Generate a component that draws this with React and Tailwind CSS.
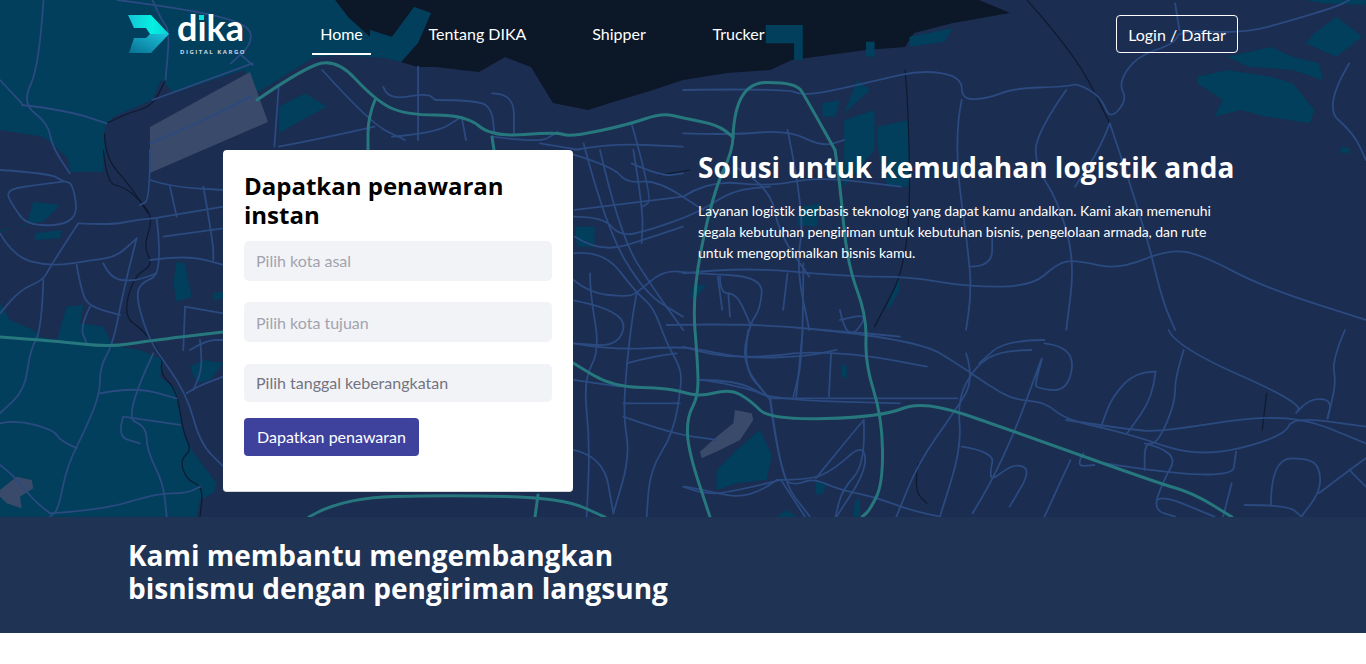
import React from 'react';

// map pieces, written in the coordinates they were read at, one group per part of the page
const Z3 = 'scale(.4355 .3333)';
const Z4 = 'translate(683 0) scale(.4355 .3333)';
const Z6 = 'translate(683 330) scale(.4355 .3333)';
const Z8 = 'translate(0 150) scale(.3333)';
const Z9 = 'translate(570 150) scale(.3333)';

const TEAL_AREAS = [
  ['', '0,0 335,0 348,17 370,37 370,30 392,37 414,7 431,13 418,43 401,62 385,58 340,55 314,57 257,93 244,70 174,93 161,80 152,100 113,117 105,127 105,160 70,170 70,160 44,137 0,130'],
  [Z3, '640,320 700,280 750,320 680,370 640,400'],
  [Z3, '1320,680 1365,680 1365,740 1325,740'],
  [Z8, '0,460 30,510 100,540 120,560 170,570 200,470 250,465 240,520 310,530 330,570 360,590 420,600 490,630 480,680 530,720 550,840 575,900 620,960 650,1000 640,1030 600,1050 590,1100 0,1100'],
  [Z8, '100,155 180,165 130,215 85,220 0,245 0,240 80,225'],
  [Z8, '105,250 185,240 180,265 105,270'],
  [Z8, '200,0 310,0 310,65 210,65'],
  [Z8, '530,335 555,340 575,440 530,455 520,400'],
  [Z8, '640,430 670,425 670,445 640,450'],
  [Z8, '570,650 610,630 670,640 630,690 590,700'],
  [Z9, '25,230 70,230 70,285 25,285'],
  [Z9, '370,405 410,405 375,445 360,445'],
  [Z9, '500,900 570,840 605,915 590,990 500,1000 440,1020 440,960'],
  [Z9, '740,990 770,1000 760,1030 735,1035'],
  [Z9, '855,1050 870,1045 870,1100 850,1100'],
  [Z9, '620,1100 650,1080 680,1100'],
  [Z9, '815,640 830,650 830,685 815,680'],
  [Z9, '690,170 750,160 740,230 680,225'],
  [Z9, '945,480 990,380 990,420 960,470'],
  [Z4, '445,380 520,360 520,560 470,560 450,470'],
  [Z4, '370,360 440,330 440,450 370,560'],
  [Z4, '400,240 430,270 370,340'],
  [Z4, '320,310 360,300 350,350 320,350'],
  [Z4, '1180,230 1250,210 1350,230 1400,250 1450,330 1440,370 1340,350 1280,330 1220,350 1240,300 1180,250'],
  [Z4, '1450,100 1500,50 1560,110 1500,170 1430,130'],
  [Z4, '1250,170 1350,140 1400,170 1460,190 1470,240 1400,210 1300,200'],
  [Z4, '1430,0 1568,0 1568,15 1470,10'],
  [Z4, '1510,440 1530,445 1530,460 1510,458'],
];

const WATER = '335,0 348,17 370,37 370,30 392,37 414,7 431,13 418,43 401,62 418,67 435,67 479,72 505,57 531,67 553,103 588,110 610,103 653,90 683,80 727,73 770,70 792,60 866,50 905,47 914,33 953,23 1010,13 979,0';

const WATER_TEAL = [
  '190,75 275,75 275,180 255,180 255,130 190,130',
  '420,125 440,125 440,170 420,170',
  '520,110 620,85 600,125 520,140',
];

const GREY_AREAS = [
  ['', '150,127 250,72 268,122 150,173'],
  [Z8, '0,1020 50,980 95,990 100,1015 60,1040 65,1075 20,1060 0,1040'],
  [Z9, '390,905 440,860 490,820 495,780 545,790 550,810 510,870 450,900 395,925'],
];

const RIVERS = [
  [Z8, '310,0 320,100 370,110 420,150 460,205 430,290 460,345 400,380 370,500 430,540 490,620 480,670 530,720 550,850 575,900 540,930 560,990 610,1010 600,1100'],
  [Z3, '245,370 290,340 350,320 380,240'],
  [Z3, '240,400 240,470 300,560 340,640'],
  [Z4, '790,0 900,160 980,370'],
  [Z4, '510,210 520,360 520,780 440,980'],
  [Z9, '270,75 360,60'],
  [Z6, '1340,190 1330,300'],
  [Z6, '540,400 530,480 560,520'],
];

const MINOR = [
  // west
  [Z8, '0,60 150,70 190,95 220,100 235,220 85,230 40,170 15,120 105,105 190,95'],
  [Z8, '235,220 330,225 410,210 460,205'],
  [Z8, '0,250 40,320 150,350 280,330 350,320 410,265'],
  [Z8, '235,220 150,350 130,390 60,420 0,490'],
  [Z8, '130,390 125,540 90,600 75,720 0,790'],
  [Z8, '230,345 245,430 270,470 360,495'],
  [Z8, '270,470 240,530 260,580'],
  [Z8, '410,265 370,420 340,580 300,650 300,730 260,830 200,950 175,1080 150,1100'],
  [Z8, '310,340 330,385 400,395 470,370'],
  [Z8, '450,0 450,150 420,165'],
  [Z8, '470,205 490,370 420,400 410,440 430,520 460,590 560,730 600,880 670,950'],
  [Z8, '460,205 670,170'],
  [Z8, '490,260 670,235'],
  [Z8, '450,330 560,315 670,345'],
  [Z8, '450,90 510,110 670,120'],
  [Z8, '510,110 530,200'],
  [Z8, '610,110 640,280 640,330'],
  [Z8, '300,730 400,710 530,745'],
  [Z8, '0,820 50,810 160,840 180,870 230,895'],
  [Z8, '460,610 370,800 440,830 440,900 490,1000 500,1100'],
  [Z8, '370,800 350,860 420,880'],
  [Z8, '370,800 540,825'],
  [Z8, '150,1090 310,1080 470,1030 560,1030 600,1010'],
  [Z8, '0,945 40,975 100,1050 150,1090'],
  [Z8, '555,470 550,600'],
  [Z8, '555,470 670,490'],
  [Z8, '560,730 590,710 670,680'],
  [Z8, '570,600 620,570 670,570'],
  [Z8, '600,570 610,650 580,720'],
  // north west
  [Z3, '100,0 90,200 50,310 110,370 120,440 160,520'],
  [Z3, '350,0 370,60 390,90 380,240'],
  [Z3, '0,240 50,310'],
  [Z3, '50,315 150,330 245,370'],
  [Z3, '350,300 580,190'],
  [Z3, '345,430 480,355 575,290'],
  [Z3, '580,195 540,150'],
  [Z3, '270,0 420,25 570,70 580,130 530,190'],
  [Z3, '640,260 630,440'],
  [Z3, '740,210 850,370 930,420'],
  [Z3, '960,200 960,420'],
  [Z3, '1000,300 1100,300 1130,330 1135,400'],
  [Z3, '1130,280 1180,280 1180,400'],
  [Z3, '1060,350 1070,420'],
  [Z3, '1130,410 1240,430 1280,395'],
  [Z3, '1240,430 1330,450'],
  [Z3, '880,260 890,300 980,280 1000,300'],
  [Z3, '900,410 1000,400 1060,350'],
  [Z3, '640,440 720,420 860,380'],
  [Z3, '1320,450 1400,430 1568,440'],
  [Z3, '1340,430 1390,680 1480,880 1568,950'],
  [Z3, '1450,370 1500,600 1475,620'],
  [Z3, '1320,630 1568,590'],
  [Z3, '1320,710 1380,760 1500,710 1568,680'],
  [Z3, '1450,490 1520,530 1568,520'],
  // middle, under the text
  [Z9, '10,200 100,200 150,260 240,240 380,190 490,120 600,110'],
  [Z9, '10,310 100,300 200,430 250,470 290,580 330,650 335,700 310,850 240,960 230,1100'],
  [Z9, '90,0 150,260 260,430 340,540'],
  [Z9, '190,0 220,180 215,280'],
  [Z9, '0,10 130,50 170,100 260,90 400,180'],
  [Z9, '10,390 60,430 170,440 200,430 280,360 370,370 580,380 570,480 540,520 515,640 600,750'],
  [Z9, '60,370 60,430 90,600 40,690 60,880 50,1100'],
  [Z9, '0,450 170,480 150,590 10,580'],
  [Z9, '10,580 120,600 330,590 400,600 520,625 700,620 800,600'],
  [Z9, '290,525 540,520 810,545 890,550 990,560'],
  [Z9, '10,690 150,710'],
  [Z9, '200,430 190,480 170,640 160,800 180,920 130,1090'],
  [Z9, '160,760 330,760'],
  [Z9, '160,800 300,850 440,870'],
  [Z9, '170,640 250,620 320,610'],
  [Z9, '400,690 520,710 620,750 990,760'],
  [Z9, '450,380 450,430 500,430 540,520'],
  [Z9, '475,430 480,500'],
  [Z9, '700,340 700,620 670,740'],
  [Z9, '810,480 830,580 900,490 810,510'],
  [Z9, '620,990 720,990 790,960 880,880 890,960 800,1100'],
  [Z9, '600,750 630,985 720,1100'],
  [Z9, '620,990 540,1050 400,1020 345,1010'],
  [Z9, '10,900 100,920 130,1090'],
  // north east
  [Z4, '0,270 240,265 280,290 450,240 550,210 640,230 640,300 700,295 760,265 880,260 905,250 960,290 980,360 1020,300 1000,250 1040,170 1130,130 1140,90 1290,100 1400,60 1500,20 1530,0'],
  [Z4, '640,300 620,420 660,800 660,900 650,990'],
  [Z4, '880,270 810,400 810,500 860,600 900,780 880,990'],
  [Z4, '980,370 960,440 900,560'],
  [Z4, '980,370 1060,680 1100,900 1130,990'],
  [Z4, '1530,190 1470,320 1540,400 1568,480'],
  [Z4, '1130,10 1140,90'],
  [Z4, '0,400 110,405 240,390 320,440 370,420'],
  [Z4, '0,590 60,540 200,560 310,530 500,560'],
  [Z4, '240,390 280,640 260,800 290,990'],
  [Z4, '120,500 200,560 220,700 290,830'],
  [Z4, '0,820 130,800 380,830 520,830 650,860 800,860 860,790 900,780 1000,810 1120,745 1200,770 1330,860 1568,960'],
  [Z4, '80,830 90,930'],
  [Z4, '240,820 230,930'],
  [Z4, '660,800 710,800 710,700'],
  // south east
  [Z6, '0,50 70,80 200,80 280,65 420,75 560,110'],
  [Z6, '320,0 540,30 640,110 700,165 760,210 830,215 880,270 1020,310 1190,385 1380,320 1400,260 1568,290'],
  [Z6, '1115,0 1130,50 1425,220 1400,260 1440,205 1490,210 1480,265'],
  [Z6, '1520,0 1490,90 1500,160 1480,265'],
  [Z6, '1150,60 1130,140 1130,220 1090,340 1060,340 1060,420'],
  [Z6, '1085,125 1040,125 985,200 960,290'],
  [Z6, '1085,125 1080,200 1020,310'],
  [Z6, '650,70 670,150 620,250 540,400 490,560'],
  [Z6, '800,60 730,60 670,110 630,210 640,350 590,560'],
  [Z6, '830,30 740,30 680,100'],
  [Z6, '830,40 900,50 885,185 810,175 810,155 830,60 800,170 760,310 710,450 665,550'],
  [Z6, '640,350 715,365 705,430 710,450 760,400 800,420 750,530'],
  [Z6, '200,205 630,205'],
  [Z6, '200,200 225,450 260,465 300,445 360,480 440,500 520,540 590,560'],
  [Z6, '225,450 100,490 45,490 0,470'],
  [Z6, '225,450 280,560'],
  [Z6, '150,0 135,110 195,200'],
  [Z6, '275,0 260,200'],
  [Z6, '340,70 335,200'],
  [Z6, '40,150 120,150 195,200'],
  [Z6, '1060,340 1140,365 1100,460 1080,540 1130,560'],
  [Z6, '920,370 900,410 945,405'],
  [Z6, '890,390 830,560'],
  [Z6, '970,400 1260,460 1270,365'],
  [Z6, '1260,460 1240,560'],
  [Z6, '1290,525 1390,525 1420,560'],
  [Z6, '1350,525 1350,385 1445,385 1465,430 1460,490 1420,560'],
  [Z6, '1460,490 1530,420 1568,385'],
  [Z6, '1530,420 1568,470'],
  [Z6, '1090,510 1100,495 1220,560'],
  [Z6, '415,270 370,340 305,445'],
  [Z6, '415,270 420,400 365,480 350,560'],
  [Z6, '880,270 1030,300 1100,305 1390,245 1568,340'],
];

const MAJOR = [
  ['', '257,100 296,73 335,57 375,100 405,115 466,115 492,137 557,132 570,137 627,125 662,113 683,118 718,125 733,137'],
  ['', '375,100 368,117 368,150'],
  ['', '492,137 494,150'],
  ['', '733,137 735,83 796,82 807,100 835,150'],
  ['', '835,150 840,183 847,263 867,317 865,363 882,417 883,483 870,510 862,517'],
  ['', '733,137 733,150 713,193 692,293 698,367 698,397 687,417 688,450 710,517'],
  ['', '0,337 55,341 110,347 147,341 223,332'],
  ['', '560,355 573,363 613,387 670,388 698,397 730,389 750,400 770,420 882,417 923,400 1010,430 1158,483 1193,493 1232,517'],
  ['', '309,517 340,498 449,495 562,498 605,517'],
  ['', '538,495 535,517'],
];

// rounds the corners of a read-off line so the roads don't look like zigzags
function toPath(points) {
  const p = points.split(' ').map((q) => q.split(',').map(Number));
  let d = `M${p[0][0]} ${p[0][1]}`;
  for (let i = 1; i < p.length - 1; i++) {
    const mx = (p[i][0] + p[i + 1][0]) / 2;
    const my = (p[i][1] + p[i + 1][1]) / 2;
    d += ` Q${p[i][0]} ${p[i][1]} ${mx} ${my}`;
  }
  const last = p[p.length - 1];
  return `${d} L${last[0]} ${last[1]}`;
}

function Area({ transform, points, className }) {
  return <polygon transform={transform || undefined} points={points} className={className} />;
}

function Line({ transform, points, className }) {
  return (
    <path
      transform={transform || undefined}
      d={toPath(points)}
      fill="none"
      strokeLinejoin="round"
      strokeLinecap="round"
      vectorEffect="non-scaling-stroke"
      className={className}
    />
  );
}

function CityMap() {
  return (
    <svg className="absolute inset-0 h-full w-full blur-[0.4px]" viewBox="0 0 1366 517" aria-hidden="true">
      <polygon points={WATER} className="fill-[#0c1728]" />
      {WATER_TEAL.map((p) => <Area key={p} transform={Z4} points={p} className="fill-[#013f5c]" />)}
      {TEAL_AREAS.map(([t, p]) => <Area key={p} transform={t} points={p} className="fill-[#013f5c]" />)}
      {GREY_AREAS.map(([t, p]) => <Area key={p} transform={t} points={p} className="fill-[#3a4a6a]" />)}
      {RIVERS.map(([t, p]) => <Line key={p} transform={t} points={p} className="stroke-[#0e1a30] [stroke-width:1.2px]" />)}
      {MINOR.map(([t, p]) => <Line key={p} transform={t} points={p} className="stroke-[#2b4a80] [stroke-width:1.8px]" />)}
      {MAJOR.map(([t, p]) => <Line key={p} transform={t} points={p} className="stroke-[#26777e] [stroke-width:3px]" />)}
    </svg>
  );
}

function Logo() {
  return (
    <div className="relative h-[40px] w-[117px] shrink-0">
      <svg className="absolute left-0 top-0" width="42" height="39" viewBox="0 0 42 39" aria-hidden="true">
        <defs>
          <linearGradient id="logoTop" x1="0" y1="0" x2="1" y2="0">
            <stop offset="0" stopColor="#17c3d6" />
            <stop offset="0.6" stopColor="#03f0e2" />
            <stop offset="1" stopColor="#0cd0d8" />
          </linearGradient>
          <linearGradient id="logoBottom" x1="0" y1="1" x2="1" y2="0">
            <stop offset="0" stopColor="#0a6f92" />
            <stop offset="1" stopColor="#19c6dc" />
          </linearGradient>
        </defs>
        <polygon points="0,0 23,0 41,19 22,19 18,13 6,13" fill="url(#logoTop)" />
        <polygon points="1,38 6,23 18,23 22,19 41,19 23,38" fill="url(#logoBottom)" />
      </svg>
      <span className="absolute left-[49px] top-[-1px] font-['Lato'] text-[36px] font-bold leading-[26px] text-white">
        dıka
      </span>
      <span className="absolute left-[71px] top-[0px] h-[5px] w-[5px] bg-[#0ee0dc]" />
      <span className="absolute left-[52px] top-[33px] whitespace-nowrap font-['Open_Sans'] text-[6px] font-bold leading-[8px] tracking-[1.5px] text-[#cfd8e0]">
        DIGITAL KARGO
      </span>
    </div>
  );
}

const LINKS = [
  { label: 'Home', active: true, width: 'w-[59px]' },
  { label: 'Tentang DIKA', width: 'w-[113px]' },
  { label: 'Shipper', width: 'w-[70px]' },
  { label: 'Trucker', width: 'w-[69px]' },
];

function Navbar() {
  return (
    <div className="flex items-start pt-[15px]">
      <Logo />
      <nav className="ml-[67px] flex gap-[50px]">
        {LINKS.map((l) => (
          <a
            key={l.label}
            className={`flex h-[40px] items-center justify-center border-b-2 text-base text-white ${l.width} ${
              l.active ? 'border-white' : 'border-transparent'
            }`}
          >
            {l.label}
          </a>
        ))}
      </nav>
      <button className="ml-auto h-[38px] w-[122px] rounded-[4px] border border-white pt-[1px] text-base text-white">
        Login / Daftar
      </button>
    </div>
  );
}

function QuoteCard() {
  return (
    <form className="h-[342px] w-[350px] shrink-0 rounded-[4px] border-b border-[#d8d8d8] bg-white px-[21px] pt-[21px]">
      <h2 className="font-['Open_Sans'] text-2xl font-bold leading-[29px] text-black">
        Dapatkan penawaran instan
      </h2>
      <input
        placeholder="Pilih kota asal"
        className="mt-[12px] block h-[40px] w-full rounded-[5px] bg-[#f2f3f7] px-3 pb-[2px] text-base placeholder:text-[#a3a3ad]"
      />
      <input
        placeholder="Pilih kota tujuan"
        className="mt-[21px] block h-[40px] w-full rounded-[5px] bg-[#f2f3f7] px-3 text-base placeholder:text-[#a3a3ad]"
      />
      <input
        placeholder="Pilih tanggal keberangkatan"
        className="mt-[22px] block h-[38px] w-full rounded-[5px] bg-[#f2f3f7] px-3 pb-[2px] text-base placeholder:text-[#73737f]"
      />
      <button
        type="button"
        className="mt-4 block h-[38px] w-[175px] rounded-[4px] bg-[#3f429c] text-base text-white"
      >
        Dapatkan penawaran
      </button>
    </form>
  );
}

export default function App() {
  return (
    <div className="min-h-[664px] bg-white font-['Lato'] text-base">
      <section className="relative h-[517px] overflow-hidden bg-[#1b2d50]">
        <CityMap />
        <div className="relative mx-auto w-[1110px]">
          <Navbar />
          <div className="mt-[95px] flex pl-[95px]">
            <QuoteCard />
            <div className="ml-[125px] w-[540px] text-white">
              <h1 className="font-['Open_Sans'] text-[28px] font-bold leading-[34px]">
                Solusi untuk kemudahan logistik anda
              </h1>
              <p className="mt-[16px] w-[520px] text-sm leading-[21px] tracking-[-0.05px]">
                Layanan logistik berbasis teknologi yang dapat kamu andalkan. Kami akan memenuhi segala kebutuhan pengiriman untuk kebutuhan bisnis, pengelolaan armada, dan rute untuk mengoptimalkan bisnis kamu.
              </p>
            </div>
          </div>
        </div>
      </section>
      <section className="h-[116px] bg-[#1f3354] pt-[22px]">
        <h2 className="mx-auto w-[1110px] font-['Open_Sans'] text-[28px] font-bold leading-[33px] text-white">
          Kami membantu mengembangkan
          <br />
          bisnismu dengan pengiriman langsung
        </h2>
      </section>
    </div>
  );
}
